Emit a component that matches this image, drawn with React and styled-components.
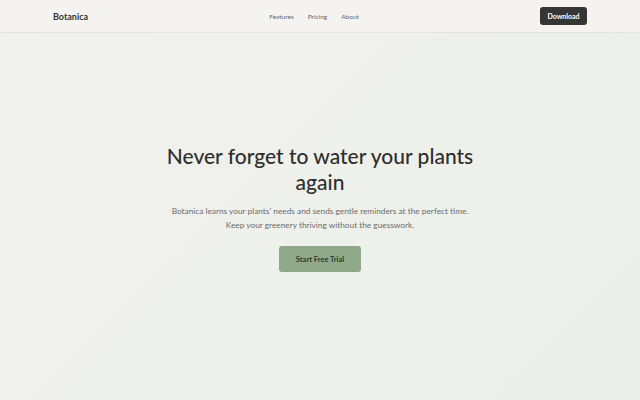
import React from "react";
import styled, { createGlobalStyle } from "styled-components";

const Global = createGlobalStyle`
  html, body { margin: 0; padding: 0; }
  body {
    font-family: Lato, "Noto Sans", sans-serif;
    background: linear-gradient(135deg, #f1f1ed 0%, #eef0eb 60%, #ebede8 100%);
    min-height: 100vh;
  }
`;

const Page = styled.div`
  display: flex;
  flex-direction: column;
  min-height: 100vh;
`;

const Header = styled.header`
  height: 33px;
  box-sizing: border-box;
  padding: 0 53px;
  display: flex;
  justify-content: space-between;
  align-items: center;
  background: #f4f3ef;
  border-bottom: 1px solid #e4e4e0;
`;

const Logo = styled.div`
  font-size: 9px;
  font-weight: 700;
  color: #333;
`;

const Nav = styled.nav`
  display: flex;
  gap: 14px;
`;

const NavLink = styled.a`
  font-size: 6.5px;
  color: #686868;
  text-decoration: none;
`;

const DarkButton = styled.button`
  font-family: inherit;
  font-size: 7px;
  font-weight: 700;
  color: #fff;
  background: #353535;
  border: none;
  border-radius: 3px;
  width: 47px;
  height: 18px;
  padding: 0;
`;

const Hero = styled.main`
  display: flex;
  flex-direction: column;
  align-items: center;
  padding-top: 110px;
  text-align: center;
`;

const Title = styled.h1`
  margin: 0;
  font-size: 21px;
  line-height: 26px;
  font-weight: 500;
  color: #2e2e2e;
  max-width: 320px;
`;

const Subtitle = styled.p`
  margin: 10px 0 0;
  font-size: 8.3px;
  line-height: 13.5px;
  color: #6c6c6c;
  max-width: 310px;
`;

const TrialButton = styled.button`
  margin-top: 14px;
  font-family: inherit;
  font-size: 7.5px;
  font-weight: 700;
  color: #2d3b2b;
  background: #8fa98a;
  border: none;
  border-radius: 3px;
  width: 82px;
  height: 26px;
  padding: 0;
`;

export default function App() {
  return (
    <>
      <Global />
      <Page>
        <Header>
          <Logo>Botanica</Logo>
          <Nav>
            <NavLink href="#">Features</NavLink>
            <NavLink href="#">Pricing</NavLink>
            <NavLink href="#">About</NavLink>
          </Nav>
          <DarkButton>Download</DarkButton>
        </Header>
        <Hero>
          <Title>Never forget to water your plants again</Title>
          <Subtitle>
            Botanica learns your plants' needs and sends gentle reminders at the perfect time.
            Keep your greenery thriving without the guesswork.
          </Subtitle>
          <TrialButton>Start Free Trial</TrialButton>
        </Hero>
      </Page>
    </>
  );
}
